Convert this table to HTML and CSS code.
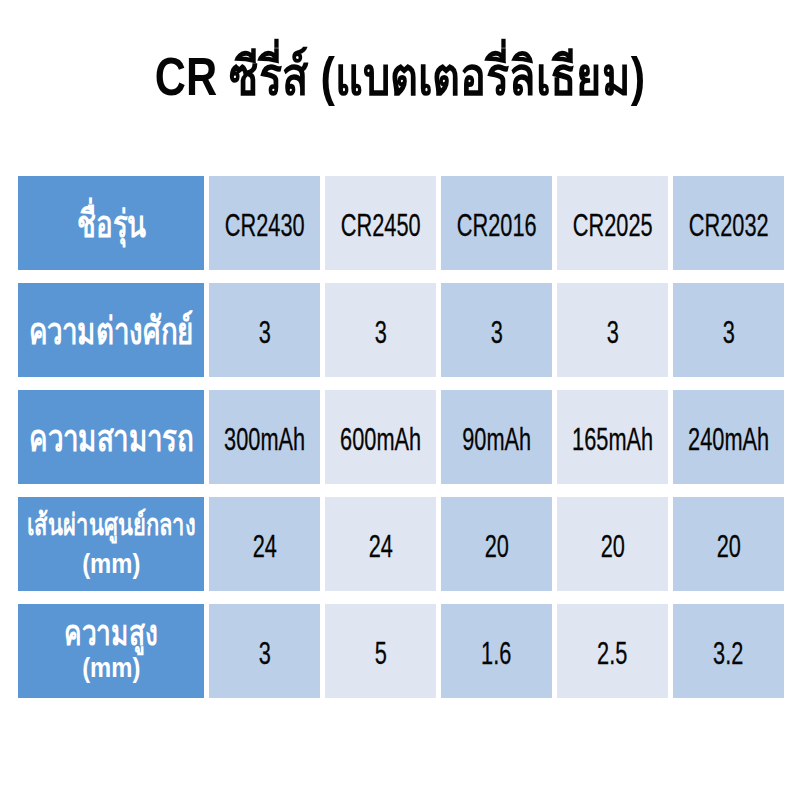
FILE: index.html
```html
<!DOCTYPE html>
<html lang="th">
<head>
<meta charset="utf-8">
<link rel="stylesheet" href="styles.css">
</head>
<body>
<div class="page">
  <h1 class="title">CR ซีรี่ส์ (แบตเตอรี่ลิเธียม)</h1>
  <div class="table">
    <div class="row">
      <div class="label"><span class="t">ชื่อรุ่น</span></div>
      <div class="cell mid"><span class="v">CR2430</span></div>
      <div class="cell light"><span class="v">CR2450</span></div>
      <div class="cell mid"><span class="v">CR2016</span></div>
      <div class="cell light"><span class="v">CR2025</span></div>
      <div class="cell mid"><span class="v">CR2032</span></div>
    </div>
    <div class="row">
      <div class="label"><span class="t">ความต่างศักย์</span></div>
      <div class="cell mid"><span class="v">3</span></div>
      <div class="cell light"><span class="v">3</span></div>
      <div class="cell mid"><span class="v">3</span></div>
      <div class="cell light"><span class="v">3</span></div>
      <div class="cell mid"><span class="v">3</span></div>
    </div>
    <div class="row">
      <div class="label"><span class="t">ความสามารถ</span></div>
      <div class="cell mid"><span class="v">300mAh</span></div>
      <div class="cell light"><span class="v">600mAh</span></div>
      <div class="cell mid"><span class="v">90mAh</span></div>
      <div class="cell light"><span class="v">165mAh</span></div>
      <div class="cell mid"><span class="v">240mAh</span></div>
    </div>
    <div class="row">
      <div class="label stack">
        <span class="t sm">เส้นผ่านศูนย์กลาง</span>
        <span class="t unit">(mm)</span>
      </div>
      <div class="cell mid"><span class="v">24</span></div>
      <div class="cell light"><span class="v">24</span></div>
      <div class="cell mid"><span class="v">20</span></div>
      <div class="cell light"><span class="v">20</span></div>
      <div class="cell mid"><span class="v">20</span></div>
    </div>
    <div class="row">
      <div class="label stack tight">
        <span class="t hi">ความสูง</span>
        <span class="t unit">(mm)</span>
      </div>
      <div class="cell mid"><span class="v">3</span></div>
      <div class="cell light"><span class="v">5</span></div>
      <div class="cell mid"><span class="v">1.6</span></div>
      <div class="cell light"><span class="v">2.5</span></div>
      <div class="cell mid"><span class="v">3.2</span></div>
    </div>
  </div>
</div>
</body>
</html>
```
FILE: styles.css
```css
* { box-sizing: border-box; }
html, body { margin: 0; padding: 0; background: #ffffff; }
body { font-family: "Liberation Sans", "Noto Sans", sans-serif; }
.page { width: 800px; height: 800px; padding-top: 46px; }
.title {
  margin: 0;
  text-align: center;
  font-size: 54px;
  font-weight: bold;
  color: #050505;
  line-height: 60px;
  white-space: nowrap;
  transform: scaleX(0.8);
}
.table {
  margin-top: 70px;
  margin-left: 18px;
  display: flex;
  flex-direction: column;
  gap: 13px;
}
.row {
  display: grid;
  grid-template-columns: 186px repeat(5, 111px);
  grid-template-rows: 94px;
  column-gap: 5px;
}
.label {
  background: #5b96d4;
  color: #ffffff;
  font-weight: bold;
  font-size: 38px;
  display: flex;
  align-items: center;
  justify-content: center;
  text-align: center;
  white-space: nowrap;
  overflow: hidden;
}
.t {
  display: inline-block;
  transform: scaleX(0.73);
}
.label.stack { flex-direction: column; }
.label.stack .t { line-height: 39px; }
.label.stack .sm { font-size: 30px; transform: scaleX(0.73); }
.label.stack .unit { font-size: 28px; transform: scaleX(0.85); }
.label.tight .hi { font-size: 36px; line-height: 30px; padding-bottom: 4px; }
.label.tight .unit { line-height: 32px; }
.cell {
  display: flex;
  align-items: center;
  justify-content: center;
  padding-top: 5px;
  font-size: 32px;
  color: #050505;
  white-space: nowrap;
}
.v {
  display: inline-block;
  transform: scaleX(0.68);
  -webkit-text-stroke: 0.3px #050505;
}
.mid { background: #bbd0e8; }
.light { background: #dfe6f2; }
```
